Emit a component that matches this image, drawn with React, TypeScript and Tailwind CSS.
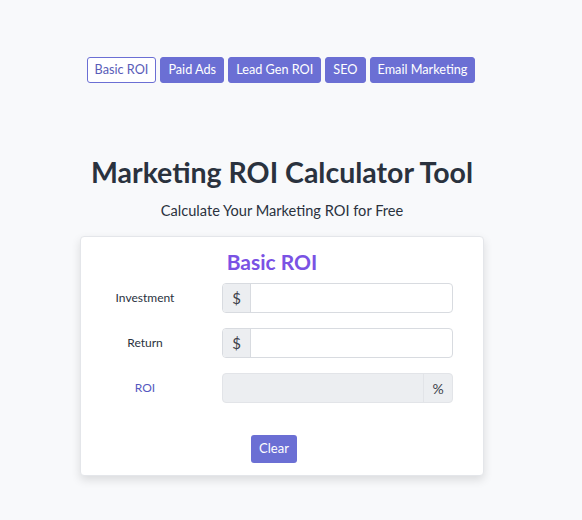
import { useState } from "react";

const TABS = ["Basic ROI", "Paid Ads", "Lead Gen ROI", "SEO", "Email Marketing"];

export default function App() {
  const [active, setActive] = useState("Basic ROI");
  const [investment, setInvestment] = useState("");
  const [ret, setRet] = useState("");

  const inv = parseFloat(investment);
  const r = parseFloat(ret);
  const roi = inv > 0 && !isNaN(r) ? (((r - inv) / inv) * 100).toFixed(2) : "";

  return (
    <div
      className="min-h-[520px] bg-[#f8f9fb] text-[#2d3440]"
      style={{ fontFamily: "Lato, 'Noto Sans', sans-serif" }}
    >
      {/* Tabs */}
      <div className="flex justify-center gap-[4px] pt-[57px] pr-[20px]">
        {TABS.map((t) =>
          t === active ? (
            <button
              key={t}
              onClick={() => setActive(t)}
              className="h-[26px] px-[7px] rounded-[3px] border border-[#6b6fd4] bg-white text-[#5a5cb8] text-[12.7px]"
            >
              {t}
            </button>
          ) : (
            <button
              key={t}
              onClick={() => setActive(t)}
              className="h-[26px] px-[7px] rounded-[3px] border border-[#6b6fd4] bg-[#6b6fd4] text-white text-[12.7px]"
            >
              {t}
            </button>
          )
        )}
      </div>

      {/* Heading */}
      <h1 className="mt-[71px] text-center text-[28.5px] font-bold leading-[36px] text-[#2a323e] pr-[18px]">
        Marketing ROI Calculator Tool
      </h1>
      <p className="mt-[11px] text-center text-[14.6px] leading-[20px] text-[#2a323e] pr-[18px]">
        Calculate Your Marketing ROI for Free
      </p>

      {/* Card */}
      <div className="ml-[80px] mt-[15px] w-[404px] h-[240px] bg-white rounded-[4px] border border-[#e4e6ea] shadow-[0_4px_10px_rgba(0,0,0,0.12)] flex flex-col">
        <h2 className="mt-[12px] text-center text-[21px] font-bold leading-[26px] text-[#7a52e4] pr-[20px]">
          {active}
        </h2>

        <div className="mt-[8px] flex flex-col gap-[15px]">
          <div className="flex items-center">
            <label className="w-[128px] text-center text-[12px] text-[#2a323e]">Investment</label>
            <div className="ml-[13px] flex h-[30px] w-[231px] rounded-[4px] border border-[#d8dbe0] overflow-hidden">
              <span className="w-[28px] flex items-center justify-center bg-[#eceef1] border-r border-[#d8dbe0] text-[15px] text-[#3c424a]">
                $
              </span>
              <input
                value={investment}
                onChange={(e) => setInvestment(e.target.value)}
                className="flex-1 min-w-0 px-2 outline-none text-[14px]"
              />
            </div>
          </div>

          <div className="flex items-center">
            <label className="w-[128px] text-center text-[12px] text-[#2a323e]">Return</label>
            <div className="ml-[13px] flex h-[30px] w-[231px] rounded-[4px] border border-[#d8dbe0] overflow-hidden">
              <span className="w-[28px] flex items-center justify-center bg-[#eceef1] border-r border-[#d8dbe0] text-[15px] text-[#3c424a]">
                $
              </span>
              <input
                value={ret}
                onChange={(e) => setRet(e.target.value)}
                className="flex-1 min-w-0 px-2 outline-none text-[14px]"
              />
            </div>
          </div>

          <div className="flex items-center">
            <label className="w-[128px] text-center text-[12px] text-[#5558c0]">ROI</label>
            <div className="ml-[13px] flex h-[30px] w-[231px] rounded-[4px] border border-[#e2e4e8] overflow-hidden bg-[#eceef1]">
              <input
                readOnly
                value={roi}
                className="flex-1 min-w-0 px-2 outline-none text-[14px] bg-transparent"
              />
              <span className="w-[29px] flex items-center justify-center border-l border-[#e2e4e8] text-[14px] text-[#3c424a]">
                %
              </span>
            </div>
          </div>
        </div>

        <div className="mt-[32px] flex justify-center pr-[16px]">
          <button
            onClick={() => {
              setInvestment("");
              setRet("");
            }}
            className="h-[28px] px-[8px] rounded-[3px] bg-[#6b6fd4] text-white text-[13px]"
          >
            Clear
          </button>
        </div>
      </div>
    </div>
  );
}
